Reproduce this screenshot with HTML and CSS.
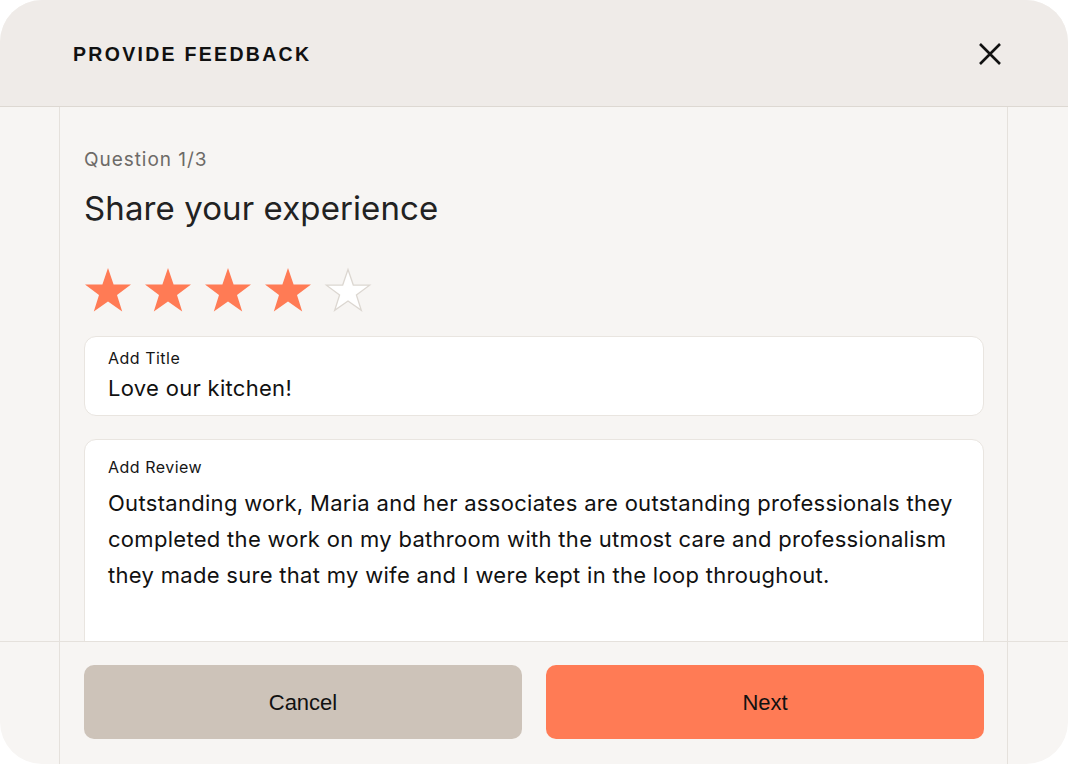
FILE: index.html
```html
<!DOCTYPE html>
<html>
<head>
<meta charset="utf-8">
<link rel="stylesheet" href="styles.css">
</head>
<body>
<div class="modal">
  <header class="head">
    <h1 class="head-title">PROVIDE FEEDBACK</h1>
    <button class="close" aria-label="Close">
      <svg width="24" height="24" viewBox="0 0 24 24"><path d="M2 2 L22 22 M22 2 L2 22" stroke="#111" stroke-width="2.6" fill="none"/></svg>
    </button>
  </header>
  <div class="body-wrap">
    <div class="side"></div>
    <main class="content">
      <div class="q-num">Question 1/3</div>
      <h2 class="q-title">Share your experience</h2>
      <div class="stars">
        <svg class="star" viewBox="0 0 48 46"><path d="M24 1 L29.6 17.4 L47 17.6 L33 28 L38.2 44.6 L24 34.6 L9.8 44.6 L15 28 L1 17.6 L18.4 17.4 Z" fill="#ff7b55"/></svg>
        <svg class="star" viewBox="0 0 48 46"><path d="M24 1 L29.6 17.4 L47 17.6 L33 28 L38.2 44.6 L24 34.6 L9.8 44.6 L15 28 L1 17.6 L18.4 17.4 Z" fill="#ff7b55"/></svg>
        <svg class="star" viewBox="0 0 48 46"><path d="M24 1 L29.6 17.4 L47 17.6 L33 28 L38.2 44.6 L24 34.6 L9.8 44.6 L15 28 L1 17.6 L18.4 17.4 Z" fill="#ff7b55"/></svg>
        <svg class="star" viewBox="0 0 48 46"><path d="M24 1 L29.6 17.4 L47 17.6 L33 28 L38.2 44.6 L24 34.6 L9.8 44.6 L15 28 L1 17.6 L18.4 17.4 Z" fill="#ff7b55"/></svg>
        <svg class="star" viewBox="0 0 48 46"><path d="M24 2.5 L29.3 18 L45.6 18.2 L32.4 28 L37.3 43.4 L24 34 L10.7 43.4 L15.6 28 L2.4 18.2 L18.7 18 Z" fill="#fff" stroke="#dcd7d1" stroke-width="1.3"/></svg>
      </div>
      <div class="field">
        <div class="label">Add Title</div>
        <div class="value">Love our kitchen!</div>
      </div>
      <div class="field review">
        <div class="label">Add Review</div>
        <div class="value long">Outstanding work, Maria and her associates are outstanding professionals they<br>completed the work on my bathroom with the utmost care and professionalism<br>they made sure that my wife and I were kept in the loop throughout.</div>
      </div>
    </main>
    <div class="side"></div>
  </div>
  <footer class="foot">
    <div class="side"></div>
    <div class="actions">
      <button class="btn cancel">Cancel</button>
      <button class="btn next">Next</button>
    </div>
    <div class="side"></div>
  </footer>
</div>
</body>
</html>
```
FILE: styles.css
```css
* { box-sizing: border-box; }
html, body { margin: 0; padding: 0; background: #ffffff; }
body { width: 1068px; height: 764px; overflow: hidden; font-family: Inter, "Liberation Sans", sans-serif; }

.modal {
  width: 1068px;
  height: 764px;
  border-radius: 42px;
  overflow: hidden;
  background: #f7f5f3;
  display: flex;
  flex-direction: column;
}

.head {
  height: 107px;
  flex: none;
  background: #efebe8;
  border-bottom: 1px solid #ddd8d2;
  display: flex;
  align-items: center;
  justify-content: space-between;
  padding: 0 66px 0 73px;
}
.head-title {
  margin: 0;
  font-family: "Liberation Sans", Arial, sans-serif;
  font-size: 19.5px;
  font-weight: 700;
  letter-spacing: 2.3px;
  color: #111;
  padding-top: 2px;
}
.close {
  border: 0;
  background: none;
  padding: 0;
  width: 24px;
  height: 24px;
  display: flex;
  margin-top: 1px;
}

.body-wrap {
  flex: 1;
  display: flex;
  overflow: hidden;
  min-height: 0;
}
.side {
  width: 60px;
  flex: none;
}
.body-wrap .side:first-child, .foot .side:first-child { border-right: 1px solid #e5e1dc; width: 60px; }
.body-wrap .side:last-child, .foot .side:last-child { border-left: 1px solid #e5e1dc; width: 61px; }

.content {
  flex: 1;
  padding: 41px 23px 0 24px;
  overflow: hidden;
}
.q-num {
  font-size: 19px;
  color: #6d6a67;
  line-height: 24px;
  letter-spacing: 0.95px;
}
.q-title {
  margin: 16px 0 0;
  font-size: 33px;
  font-weight: 400;
  color: #222;
  line-height: 40px;
  letter-spacing: 0.1px;
}
.stars {
  display: flex;
  gap: 12px;
  margin-top: 39px;
}
.star { width: 48px; height: 46px; display: block; }

.field {
  margin-top: 23px;
  background: #fff;
  border: 1px solid #e9e5e0;
  border-radius: 12px;
  padding: 11px 23px 14px;
  height: 80px;
}
.field.review {
  height: 260px;
  padding-top: 17px;
}
.label {
  font-size: 16px;
  color: #161616;
  line-height: 20px;
  letter-spacing: 0.5px;
}
.value {
  font-size: 22px;
  color: #111;
  line-height: 28px;
  margin-top: 6px;
  letter-spacing: 0.3px;
}
.value.long {
  line-height: 36px;
  margin-top: 8px;
  white-space: nowrap;
}

.foot {
  height: 123px;
  flex: none;
  border-top: 1px solid #e5e1dc;
  display: flex;
}
.actions {
  flex: 1;
  display: flex;
  gap: 24px;
  padding: 23px 23px 0 24px;
}
.btn {
  flex: 1;
  height: 74px;
  border: 0;
  border-radius: 10px;
  font-family: "Liberation Sans", Arial, sans-serif;
  font-size: 22px;
  color: #111;
  padding-top: 3px;
}
.cancel { background: #cdc3b9; }
.next { background: #ff7b55; }
```
